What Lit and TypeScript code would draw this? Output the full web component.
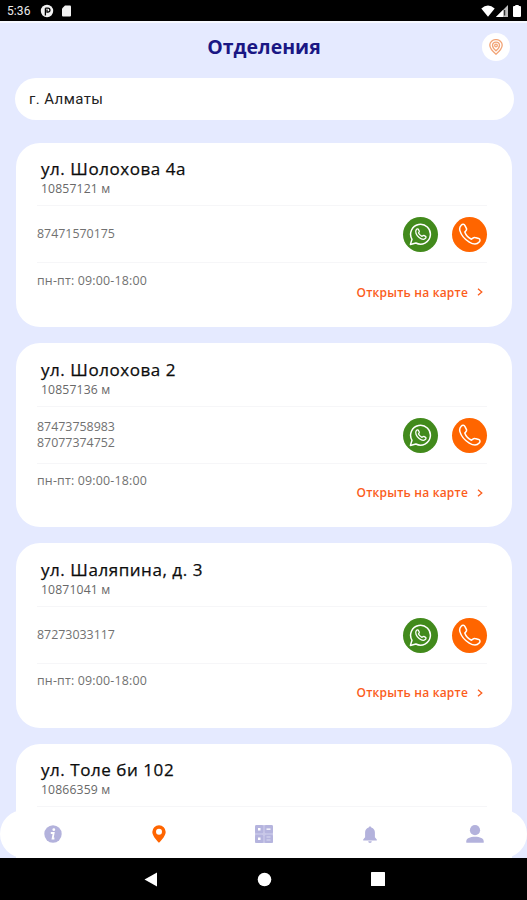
import { LitElement, html, css, svg, nothing } from "lit";
import { customElement, property } from "lit/decorators.js";

interface Branch {
  street: string;
  distance: string;
  phones: string[];
  hours?: string;
}

const branches: Branch[] = [
  { street: "ул. Шолохова 4а", distance: "10857121 м", phones: ["87471570175"], hours: "пн-пт: 09:00-18:00" },
  { street: "ул. Шолохова 2", distance: "10857136 м", phones: ["87473758983", "87077374752"], hours: "пн-пт: 09:00-18:00" },
  { street: "ул. Шаляпина, д. 3", distance: "10871041 м", phones: ["87273033117"], hours: "пн-пт: 09:00-18:00" },
  { street: "ул. Толе би 102", distance: "10866359 м", phones: [] },
];

@customElement("status-bar")
class StatusBar extends LitElement {
  static styles = css`
    :host { display: flex; align-items: center; height: 21px; padding: 0 6px 0 7px; background: #000; border-bottom: 2px solid #f6f8ff; flex: none; }
    .time { font: 400 12px/21px Roboto, sans-serif; color: #ededed; width: 33px; letter-spacing: 0.1px; padding-top: 1px; }
    .spacer { flex: 1; }
    svg { display: block; }
    .app { margin-right: 8px; }
    .wifi { margin-right: 1px; }
    .cell { margin-right: 5px; }
  `;
  render() {
    return html`
      <span class="time">5:36</span>
      <svg class="app" width="14" height="14" viewBox="0 0 14 14">
        <circle cx="7" cy="7" r="6.2" fill="#f2f2f2" />
        <path d="M5.4 11.4V4.2M5.400 4.200H8a1.900 1.900 0 0 1 0 3.900H7V5.500" fill="none" stroke="#000" stroke-width="1.3" />
      </svg>
      <svg width="9" height="12" viewBox="0 0 9 12"><path d="M3 .5h5q1 0 1 1v9q0 1-1 1H1q-1 0-1-1V3.5z" fill="#f2f2f2" /></svg>
      <span class="spacer"></span>
      <svg class="wifi" width="14" height="12" viewBox="0 0 14 12"><path d="M7 11.7.3 3.4Q7-2.2 13.7 3.4z" fill="#fff" /></svg>
      <svg class="cell" width="12" height="12" viewBox="0 0 12 12">
        <path d="M0 12 12 0v12z" fill="#bdbdbd" /><path d="M0 12 7 5v7z" fill="#fff" /><path d="M8.600 5v5.500" stroke="#333" stroke-width="1.3" />
      </svg>
      <svg width="8" height="12" viewBox="0 0 8 12"><path d="M2.3 0h3.4v1H7q1 0 1 1v9q0 1-1 1H1q-1 0-1-1V2q0-1 1-1h1.3z" fill="#fff" /></svg>
    `;
  }
}

@customElement("branch-card")
class BranchCard extends LitElement {
  @property({ attribute: false }) branch!: Branch;

  static styles = css`
    :host { display: flex; flex-direction: column; flex: none; box-sizing: border-box; height: 184.4px; padding: 15.5px 25px 0 21px; background: #fff; border-radius: 24px; }
    .street { margin-left: 4px; font-size: 17px; line-height: 22px; font-weight: 500; color: #0c0c0c; letter-spacing: 0.55px; white-space: nowrap; -webkit-text-stroke: 0.25px #0c0c0c; }
    .distance { margin-left: 4px; font-size: 12.2px; line-height: 18px; color: #686868; height: 25px; letter-spacing: 0.15px; }
    .contacts { display: flex; align-items: center; height: 58px; border-top: 1px solid #f6f6f8; border-bottom: 1px solid #f6f6f8; box-sizing: border-box; gap: 14px; padding-top: 1px; }
    .contacts.empty { border-bottom: 0; }
    .phones { flex: 1; font-size: 12.4px; line-height: 16.5px; color: #717171; }
    .round { width: 35px; height: 35px; border-radius: 50%; display: grid; place-items: center; }
    .green { background: #428a1c; }
    .orange { background: #ff6500; }
    .hours { font-size: 12.4px; line-height: 17px; color: #717171; margin-top: 8.500px; height: 12px; letter-spacing: 0.18px; }
    .map { display: flex; align-items: center; align-self: flex-end; gap: 9px; margin-right: 4px; font-size: 12px; line-height: 17px; font-weight: 600; color: #fb5d1c; letter-spacing: 0.2px; }
    svg { display: block; }
  `;

  render() {
    const b = this.branch;
    return html`
      <div class="street">${b.street}</div>
      <div class="distance">${b.distance}</div>
      <div class="contacts ${b.phones.length ? "" : "empty"}">
        <div class="phones">${b.phones.map((p) => html`<div>${p}</div>`)}</div>
        ${b.phones.length
          ? html`
              <div class="round green">
                <svg width="23" height="23" viewBox="0 0 23 23" fill="none" stroke="#fff" stroke-linejoin="round">
                  <path d="M1.4 21.4 3 16.3A9.9 9.9 0 1 1 6.9 20z" stroke-width="1.5" />
                  <path d="M7.4 6.4c.8-.9 1.7-.7 2.1.2l.8 1.7c.2.6-.7 1.2-.8 1.7.8 1.6 2 2.6 3.5 3.3.6 0 1.1-1.1 1.8-.9l1.8.9c.7.4.4 1.7-.4 2.3-1.5 1.2-3.9.6-6.1-1.2C7.4 12.3 5.6 8.7 7.4 6.4z" stroke-width="1.3" />
                </svg>
              </div>
              <div class="round orange">
                <svg width="23" height="23" viewBox="0 0 23 23" fill="none" stroke="#fff" stroke-width="1.5" stroke-linejoin="round">
                  <path d="M3.2 2.2C4.5.9 6.2 1.1 7 2.6l1.5 3.1c.6 1.3-.9 2.2-1.7 3.3 1.1 3.2 3.5 5.7 6.7 7.2 1.2-.7 2.1-2.1 3.5-1.700l3.700.9c1.600.5 1.600 2.400.5 3.700-2.300 2.600-6.200 2.300-9.900 0C6.800 16.300 3.200 12.200 1.900 7.600 1.300 5.300 1.700 3.700 3.200 2.200z" />
                </svg>
              </div>`
          : nothing}
      </div>
      ${b.hours
        ? html`
            <div class="hours">${b.hours}</div>
            <div class="map">
              <span>Открыть на карте</span>
              <svg width="6" height="8" viewBox="0 0 6 8"><path d="m1 .7 3.800 3.300L1 7.300" fill="none" stroke="#fb5d1c" stroke-width="1.3" /></svg>
            </div>`
        : nothing}
    `;
  }
}

const tabIcons = [
  svg`<circle cx="9" cy="9" r="8.7" fill="#b3b2dc"/><circle cx="9.8" cy="4.7" r="1.4" fill="#fff"/><path d="M6.8 8h2.9l-1.1 5.5h1.8" fill="none" stroke="#fff" stroke-width="1.8"/>`,
  svg`<path d="M9 .3a6.700 6.700 0 0 0-6.700 6.700C2.300 11.500 9 17.800 9 17.800s6.700-6.300 6.700-10.800A6.700 6.700 0 0 0 9 .3z" fill="#ff6500"/><circle cx="9" cy="6.700" r="3" fill="#fff"/>`,
  svg`<rect width="18" height="18" rx="1.5" fill="#c9c8e8"/><g fill="#b5b4de"><rect width="8.300" height="8.300" rx="1.500"/><rect x="9.700" width="8.300" height="8.300" rx="1.500"/><rect y="9.700" width="8.300" height="8.300" rx="1.500"/><rect x="9.700" y="9.700" width="8.300" height="8.300" rx="1.500"/></g><g fill="#fff"><rect x="3" y="3" width="2.500" height="2.500"/><rect x="11.500" y="3.500" width="4" height="1.300"/><rect x="3" y="12.500" width="2.500" height="2.500"/></g><g fill="#dcdbf1"><rect x="11.500" y="11.500" width="4" height="1"/><rect x="11.500" y="14.500" width="4" height="1"/></g>`,
  svg`<path d="M9 1.500c.9 0 1.200.6 1.300 1.100 2.400.7 3.600 2.700 3.600 5v4.700l1.900 2.300v.8H2.200v-.8l1.900-2.300V7.600c0-2.300 1.200-4.300 3.600-5C7.800 2.100 8.100 1.500 9 1.500zM7.200 16.200h3.600a1.800 1.800 0 0 1-3.600 0z" fill="#b3b2dc"/>`,
  svg`<circle cx="9" cy="5.200" r="5.100" fill="#b3b2dc"/><path d="M.3 17.800v-1.500C.3 13.300 4 11.800 9 11.800s8.700 1.500 8.700 4.500v1.500z" fill="#b3b2dc"/>`,
];

@customElement("tab-bar")
class TabBar extends LitElement {
  static styles = css`
    :host { display: flex; justify-content: space-between; align-items: center; box-sizing: border-box; padding: 0 43px 0 44px; height: 48px; background: #fff; border-radius: 24px; }
    svg { display: block; }
  `;
  render() {
    return tabIcons.map((i) => html`<svg width="18" height="18" viewBox="0 0 18 18">${i}</svg>`);
  }
}

@customElement("app-root")
class AppRoot extends LitElement {
  static styles = css`
    :host { display: flex; flex-direction: column; position: relative; width: 527px; height: 900px; overflow: hidden; background: #e5eaff; font-family: "Open Sans", "Noto Sans", sans-serif; }
    .header { display: grid; grid-template-columns: 1fr auto 1fr; align-items: center; height: 47px; padding: 0 17px 0 18px; flex: none; }
    .title { grid-column: 2; font-size: 19.5px; line-height: 26px; font-weight: 700; color: #1a1784; }
    .pin { justify-self: end; width: 28px; height: 28px; border-radius: 50%; background: #fff; display: grid; place-items: center; }
    .search { flex: none; margin: 8px 13px 0 15px; height: 42px; border-radius: 21px; background: #fff; box-sizing: border-box; padding: 0 14px; font: 400 15px/43px Roboto, sans-serif; color: #222; letter-spacing: 0.42px; }
    .list { flex: 1; min-height: 0; overflow: hidden; display: flex; flex-direction: column; gap: 16px; margin: 22.7px 15px 0 16px; }
    .tabs { position: absolute; left: 0; right: 0; bottom: 42px; }
    .system { flex: none; height: 42px; background: #000; display: flex; justify-content: center; align-items: center; gap: 99px; padding-left: 1px; }
    svg { display: block; }
  `;
  render() {
    return html`
      <status-bar></status-bar>
      <div class="header">
        <div class="title">Отделения</div>
        <div class="pin">
          <svg width="14" height="16" viewBox="0 0 14 16" fill="none" stroke="#f2a375" stroke-width="1.3">
            <path d="M7 15.2S.8 10.2.8 6.1a6.2 5.5 0 0 1 12.4 0C13.2 10.2 7 15.2 7 15.2z" />
            <path d="M7 11.8S3.5 8.9 3.5 6.300a3.500 3.200 0 0 1 7 0C10.500 8.900 7 11.800 7 11.800z" />
            <circle cx="7" cy="6.500" r="1.300" />
          </svg>
        </div>
      </div>
      <div class="search">г. Алматы</div>
      <div class="list">${branches.map((b) => html`<branch-card .branch=${b}></branch-card>`)}</div>
      <tab-bar class="tabs"></tab-bar>
      <div class="system">
        <svg width="14" height="15" viewBox="0 0 14 15"><path d="M.5 7.500 13 .5v14z" fill="#fff" /></svg>
        <svg width="15" height="15" viewBox="0 0 15 15"><circle cx="7.500" cy="7.500" r="6.800" fill="#fff" /></svg>
        <svg width="14" height="14" viewBox="0 0 14 14"><rect width="14" height="14" rx=".5" fill="#fff" /></svg>
      </div>
    `;
  }
}
